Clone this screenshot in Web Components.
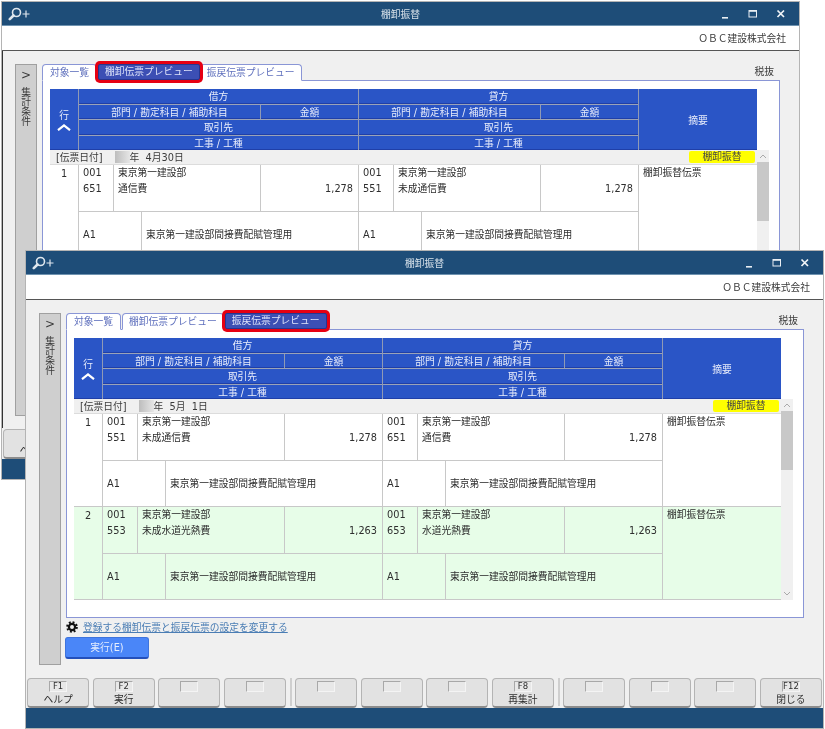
<!DOCTYPE html>
<html lang="ja">
<head>
<meta charset="utf-8">
<title>棚卸振替</title>
<style>
    html, body { margin: 0; padding: 0; background: #fff; }
    body { width: 825px; height: 729px; position: relative; overflow: hidden; font: 9.75px "DejaVu Sans", "Noto Sans CJK JP", sans-serif; color: #2e2e2e; }
    #back { left: 1px; top: 1px; }
    #front { left: 25px; top: 250px; }
</style>
</head>
<body>

<desk-window id="back" heading="棚卸振替" company="ＯＢＣ建設株式会社" outlined>
    <tab-item slot="tabs">対象一覧</tab-item>
    <tab-item slot="tabs" selected>棚卸伝票プレビュー</tab-item>
    <tab-item slot="tabs">振戻伝票プレビュー</tab-item>
    <voucher-table slot="table" date="  4月30日">
        <voucher-row no="1" left-code="651" left-name="通信費" right-code="551" right-name="未成通信費" amount="1,278"></voucher-row>
    </voucher-table>
    <fn-bar slot="footer" labels="F1:ヘルプ"></fn-bar>
</desk-window>

<desk-window id="front" heading="棚卸振替" company="ＯＢＣ建設株式会社">
    <tab-item slot="tabs">対象一覧</tab-item>
    <tab-item slot="tabs">棚卸伝票プレビュー</tab-item>
    <tab-item slot="tabs" selected>振戻伝票プレビュー</tab-item>
    <voucher-table slot="table" date="  5月  1日">
        <voucher-row no="1" left-code="551" left-name="未成通信費" right-code="651" right-name="通信費" amount="1,278"></voucher-row>
        <voucher-row no="2" left-code="553" left-name="未成水道光熱費" right-code="653" right-name="水道光熱費" amount="1,263" green></voucher-row>
    </voucher-table>
    <settings-link slot="after">登録する棚卸伝票と振戻伝票の設定を変更する</settings-link>
    <run-button slot="after">実行(E)</run-button>
    <fn-bar slot="footer" labels="F1:ヘルプ,F2:実行,,,,,,F8:再集計,,,,F12:閉じる"></fn-bar>
</desk-window>

<script>
class DeskWindow extends HTMLElement {
    constructor() {
        super();
        this.attachShadow({ mode: 'open' });
    }
    connectedCallback() {
        this.shadowRoot.innerHTML = `
            <style>
                :host {
                    position: absolute;
                    display: flex;
                    flex-direction: column;
                    box-sizing: border-box;
                    width: 799px;
                    height: 479px;
                    border: 1px solid #b4b4b4;
                    background: #f0f0f0;
                    filter: blur(0.25px);
                }
                .title {
                    display: grid;
                    grid-template-columns: 1fr auto 1fr;
                    align-items: center;
                    height: 23px;
                    border-bottom: 1px solid #6f93b0;
                    background: #1e4d78;
                    color: #d8e2ea;
                }
                .title svg.lens { margin-left: 6px; display: block; }
                .controls { display: flex; justify-content: flex-end; padding-right: 4px; }
                .controls svg { display: block; width: 28px; height: 16px; }
                .band {
                    display: flex;
                    align-items: center;
                    justify-content: flex-end;
                    height: 24px;
                    padding-right: 13px;
                    background: #fff;
                    border-bottom: 1px solid #555;
                    color: #3a3a3a;
                }
                .content {
                    flex: 1;
                    display: flex;
                    gap: 4px;
                    padding: 13px 0 0 13px;
                    min-height: 0;
                }
                :host([outlined]) .content { box-shadow: inset 1px 0 0 #333; }
                .side {
                    box-sizing: border-box;
                    width: 22px;
                    height: 352px;
                    border: 1px solid #a0a0a0;
                    background: #cfcfcf;
                    color: #3a3a3a;
                    display: flex;
                    flex-direction: column;
                    align-items: center;
                    padding-top: 3px;
                    gap: 4px;
                }
                .side b { font-weight: normal; font-size: 12px; line-height: 15px; }
                .side span { writing-mode: vertical-rl; margin-left: -2px; }
                .main { width: 739px; }
                .tabs { display: flex; align-items: flex-end; height: 16px; padding-left: 1px; }
                .tax { margin-left: auto; padding-right: 6px; align-self: flex-start; line-height: 15px; color: #3a3a3a; }
                .panel {
                    box-sizing: border-box;
                    height: 289px;
                    margin-left: 1px;
                    padding: 8px 0 0 7px;
                    border: 1px solid #8a96d6;
                    background: #fff;
                }
                .after { display: flex; flex-direction: column; align-items: flex-start; }
                .status { height: 20px; background: #1e4d78; }
            </style>
            <div class="title">
                <svg class="lens" width="24" height="16" viewBox="0 0 24 16" fill="none" stroke="#dfe7ee">
                    <circle cx="8.5" cy="6.5" r="4" stroke-width="1.6"/>
                    <path d="M5.5 9.5L1.8 13.2" stroke-width="2.6" stroke-linecap="round"/>
                    <path d="M18 4.5v7M14.5 8h7" stroke-width="1.2"/>
                </svg>
                <span>${this.getAttribute('heading')}</span>
                <div class="controls">
                    <svg viewBox="0 0 28 16"><rect x="11" y="11" width="6" height="1.6" fill="#e8eef3"/></svg>
                    <svg viewBox="0 0 28 16"><rect x="10" y="4.5" width="7.5" height="6.5" fill="none" stroke="#e8eef3"/><rect x="10" y="4" width="7.5" height="1.8" fill="#e8eef3"/></svg>
                    <svg viewBox="0 0 28 16"><path d="M10.5 4.5l6.5 6.5M17 4.5l-6.5 6.5" stroke="#f2f5f8" stroke-width="1.7" fill="none"/></svg>
                </div>
            </div>
            <div class="band">${this.getAttribute('company')}</div>
            <div class="content">
                <div class="side"><b>&gt;</b><span>集計条件</span></div>
                <div class="main">
                    <div class="tabs"><slot name="tabs"></slot><span class="tax">税抜</span></div>
                    <div class="panel"><slot name="table"></slot></div>
                    <div class="after"><slot name="after"></slot></div>
                </div>
            </div>
            <slot name="footer"></slot>
            <div class="status"></div>
        `;
    }
}

class TabItem extends HTMLElement {
    constructor() {
        super();
        this.attachShadow({ mode: 'open' });
        this.shadowRoot.innerHTML = `
            <style>
                :host {
                    display: block;
                    position: relative;
                    box-sizing: border-box;
                    height: 17px;
                    margin-bottom: -1px;
                    margin-right: 1px;
                    padding: 0 6px;
                    border: 1px solid #8a96d6;
                    border-bottom-color: #fff;
                    border-radius: 4px 4px 0 0;
                    background: #fff;
                    color: #5f70bd;
                    line-height: 15px;
                    white-space: nowrap;
                }
                :host(:first-child) { padding: 0 7px; }
                :host([selected]) {
                    z-index: 1;
                    height: 16px;
                    margin: 0;
                    padding: 0 6px;
                    border: 1px solid #27358f;
                    border-radius: 2px;
                    background: #3c4fb4;
                    color: #dfe4fa;
                    line-height: 14px;
                    box-shadow: 0 0 0 3px #e60012;
                }
            </style>
            <slot></slot>
        `;
    }
}

class VoucherTable extends HTMLElement {
    constructor() {
        super();
        this.attachShadow({ mode: 'open' });
    }
    connectedCallback() {
        this.shadowRoot.innerHTML = `
            <style>
                :host { display: block; width: 719px; }
                .head {
                    display: grid;
                    grid-template-columns: 29px 280px 280px 118px;
                    width: 707px;
                    height: 61px;
                    background: #9aa3b8;
                    color: #e9edfb;
                }
                .cell {
                    display: flex;
                    align-items: center;
                    justify-content: center;
                    background: #2a55c6;
                    box-shadow: inset 0 -1px 0 #1f3fa8;
                }
                .no { flex-direction: column; gap: 2px; border-right: 1px solid #8f9ab5; box-sizing: border-box; }
                .no svg { display: block; }
                .group {
                    display: grid;
                    grid-template-columns: 182px 1fr;
                    grid-template-rows: repeat(4, 1fr);
                    gap: 1px 0;
                    border-right: 1px solid #8f9ab5;
                    box-sizing: border-box;
                }
                .wide { grid-column: 1 / 3; }
                .acct { border-right: 1px solid #8f9ab5; }
                .date {
                    display: flex;
                    align-items: center;
                    box-sizing: border-box;
                    width: 707px;
                    height: 15px;
                    padding: 0 2px 0 6px;
                    background: #f0f0f0;
                    border-bottom: 1px solid #dcdcdc;
                    white-space: pre;
                    color: #3a3a3a;
                }
                .era { width: 15px; height: 12px; margin-left: 12px; background: linear-gradient(90deg, #bdbdbd, #e6e6e6); }
                .badge {
                    margin-left: auto;
                    width: 66px;
                    height: 12px;
                    line-height: 12px;
                    border-radius: 2px;
                    background: #ffff00;
                    color: #444;
                    text-align: center;
                }
                .body { display: flex; height: 201px; }
                .rows { width: 707px; overflow: hidden; }
                .bar {
                    display: flex;
                    flex-direction: column;
                    justify-content: space-between;
                    width: 12px;
                    background: #f0f0f0;
                }
                .bar i { display: block; height: 59px; background: #c8c8c8; margin-bottom: auto; }
                .bar svg { display: block; margin: 3px auto; }
            </style>
            <div class="head">
                <div class="cell no">
                    <span>行</span>
                    <svg width="14" height="7" viewBox="0 0 14 7" fill="none" stroke="#fff" stroke-width="2.2"><path d="M1 6.2L7 1.4l6 4.8"/></svg>
                </div>
                <div class="group">
                    <div class="cell wide">借方</div>
                    <div class="cell acct">部門 / 勘定科目 / 補助科目</div>
                    <div class="cell">金額</div>
                    <div class="cell wide">取引先</div>
                    <div class="cell wide">工事 / 工種</div>
                </div>
                <div class="group">
                    <div class="cell wide">貸方</div>
                    <div class="cell acct">部門 / 勘定科目 / 補助科目</div>
                    <div class="cell">金額</div>
                    <div class="cell wide">取引先</div>
                    <div class="cell wide">工事 / 工種</div>
                </div>
                <div class="cell">摘要</div>
            </div>
            <div class="body">
                <div class="rows">
                    <div class="date">[伝票日付]<span class="era"></span>年${this.getAttribute('date')}<span class="badge">棚卸振替</span></div>
                    <slot></slot>
                </div>
                <div class="bar">
                    <svg width="8" height="6" viewBox="0 0 8 6" fill="none" stroke="#aaa"><path d="M1 5l3-3 3 3"/></svg>
                    <i></i>
                    <svg width="8" height="6" viewBox="0 0 8 6" fill="none" stroke="#aaa"><path d="M1 1l3 3 3-3"/></svg>
                </div>
            </div>
        `;
    }
}

class VoucherRow extends HTMLElement {
    constructor() {
        super();
        this.attachShadow({ mode: 'open' });
    }
    side(code, name, amount) {
        return `
            <div class="side">
                <div class="top">
                    <div class="codes"><div>001</div><div>${code}</div></div>
                    <div class="names"><div>東京第一建設部</div><div>${name}</div></div>
                    <div class="amount">${amount}</div>
                </div>
                <div class="bottom">
                    <div class="a1">A1</div>
                    <div class="memo">東京第一建設部間接費配賦管理用</div>
                </div>
            </div>`;
    }
    connectedCallback() {
        const amount = this.getAttribute('amount');
        this.shadowRoot.innerHTML = `
            <style>
                :host {
                    display: grid;
                    grid-template-columns: 29px 280px 280px 118px;
                    height: 93px;
                    box-sizing: border-box;
                    background: #fff;
                    color: #2e2e2e;
                    border-bottom: 1px solid #c8c8c8;
                    line-height: 15.5px;
                }
                :host([green]) { background: #e7fde8; }
                .no { text-align: center; padding-top: 1px; border-right: 1px solid #c8c8c8; }
                .side { display: flex; flex-direction: column; border-right: 1px solid #c8c8c8; }
                .top {
                    display: grid;
                    grid-template-columns: 35px 147px 1fr;
                    height: 46px;
                    border-bottom: 1px solid #c8c8c8;
                }
                .top > div { padding: 0 4px; min-width: 0; }
                .names, .codes { border-right: 1px solid #c8c8c8; }
                .top > .amount { text-align: right; padding: 15.5px 5px 0 0; }
                .bottom { flex: 1; display: grid; grid-template-columns: 63px 1fr; }
                .bottom > div { display: flex; align-items: center; padding-left: 4px; }
                .a1 { border-right: 1px solid #c8c8c8; }
                .sum { padding-left: 4px; }
            </style>
            <div class="no">${this.getAttribute('no')}</div>
            ${this.side(this.getAttribute('left-code'), this.getAttribute('left-name'), amount)}
            ${this.side(this.getAttribute('right-code'), this.getAttribute('right-name'), amount)}
            <div class="sum">棚卸振替伝票</div>
        `;
    }
}

class SettingsLink extends HTMLElement {
    constructor() {
        super();
        this.attachShadow({ mode: 'open' });
        this.shadowRoot.innerHTML = `
            <style>
                :host { display: flex; align-items: center; gap: 5px; height: 15px; margin: 1px 0 1px 1px; }
                a { color: #4a7db4; text-decoration: underline; }
                svg { display: block; }
            </style>
            <svg width="12" height="12" viewBox="0 0 14 14" fill="none" stroke="#111">
                <circle cx="7" cy="7" r="3.6" stroke-width="2.6"/>
                <circle cx="7" cy="7" r="5.6" stroke-width="2.4" stroke-dasharray="2.2 2.2"/>
            </svg>
            <a href="#"><slot></slot></a>
        `;
    }
}

class RunButton extends HTMLElement {
    constructor() {
        super();
        this.attachShadow({ mode: 'open' });
        this.shadowRoot.innerHTML = `
            <style>
                :host {
                    display: block;
                    box-sizing: border-box;
                    width: 84px;
                    height: 22px;
                    margin-top: 2px;
                    border: 1px solid #3f74dc;
                    border-bottom: 2px solid #2450bb;
                    border-radius: 3px;
                    background: #4a86f8;
                    color: #e6eefe;
                    line-height: 19px;
                    text-align: center;
                }
            </style>
            <slot></slot>
        `;
    }
}

class FnBar extends HTMLElement {
    constructor() {
        super();
        this.attachShadow({ mode: 'open' });
    }
    connectedCallback() {
        const labels = this.getAttribute('labels').split(',');
        let keys = '';
        for (let i = 0; i < 12; i++) {
            const [key, label] = (labels[i] || ':').split(':');
            keys += `<fn-key key="${key}">${label}</fn-key>`;
            if (i === 3 || i === 7) keys += '<span class="sep"></span>';
        }
        this.shadowRoot.innerHTML = `
            <style>
                :host { display: flex; gap: 3.5px; height: 31px; padding: 1px 1px 0 1px; box-sizing: border-box; background: #f0f0f0; }
                .sep { width: 2px; height: 28px; border-left: 1px solid #cfcfcf; border-right: 1px solid #cfcfcf; box-sizing: border-box; }
            </style>
            ${keys}
        `;
    }
}

class FnKey extends HTMLElement {
    constructor() {
        super();
        this.attachShadow({ mode: 'open' });
    }
    connectedCallback() {
        this.shadowRoot.innerHTML = `
            <style>
                :host {
                    flex: 1;
                    display: flex;
                    flex-direction: column;
                    align-items: center;
                    box-sizing: border-box;
                    height: 30px;
                    padding-top: 2px;
                    border: 1px solid #b4b4b4;
                    border-bottom: 2px solid #8c8c8c;
                    border-radius: 4px;
                    background: #e2e2e2;
                    color: #2e2e2e;
                }
                .cap {
                    box-sizing: border-box;
                    width: 18px;
                    height: 11px;
                    border: 1px solid #f4f4f4;
                    border-top-color: #a8a8a8;
                    border-left-color: #a8a8a8;
                    font-size: 8.5px;
                    line-height: 9px;
                    text-align: center;
                    background: #e8e8e8;
                }
                .label { line-height: 14px; margin-top: 1px; white-space: nowrap; }
            </style>
            <div class="cap">${this.getAttribute('key')}</div>
            <div class="label"><slot></slot></div>
        `;
    }
}

customElements.define('desk-window', DeskWindow);
customElements.define('tab-item', TabItem);
customElements.define('voucher-table', VoucherTable);
customElements.define('voucher-row', VoucherRow);
customElements.define('settings-link', SettingsLink);
customElements.define('run-button', RunButton);
customElements.define('fn-bar', FnBar);
customElements.define('fn-key', FnKey);
</script>
</body>
</html>
